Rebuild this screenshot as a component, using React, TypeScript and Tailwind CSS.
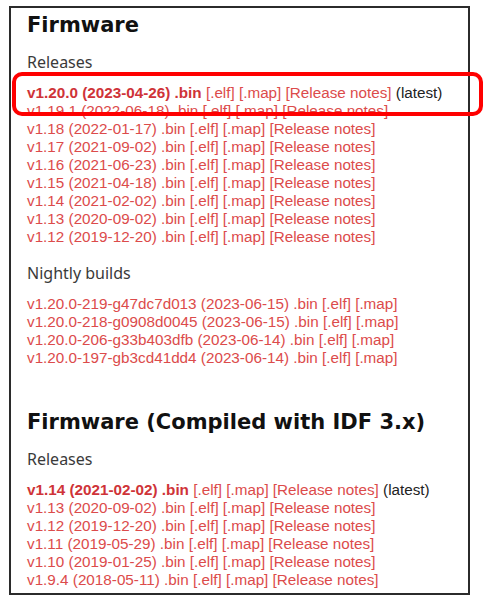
const releases = [
  { v: "v1.20.0", d: "2023-04-26", latest: true },
  { v: "v1.19.1", d: "2022-06-18" },
  { v: "v1.18", d: "2022-01-17" },
  { v: "v1.17", d: "2021-09-02" },
  { v: "v1.16", d: "2021-06-23" },
  { v: "v1.15", d: "2021-04-18" },
  { v: "v1.14", d: "2021-02-02" },
  { v: "v1.13", d: "2020-09-02" },
  { v: "v1.12", d: "2019-12-20" },
];

const nightly = [
  { v: "v1.20.0-219-g47dc7d013", d: "2023-06-15" },
  { v: "v1.20.0-218-g0908d0045", d: "2023-06-15" },
  { v: "v1.20.0-206-g33b403dfb", d: "2023-06-14" },
  { v: "v1.20.0-197-gb3cd41dd4", d: "2023-06-14" },
];

const idf3 = [
  { v: "v1.14", d: "2021-02-02", latest: true },
  { v: "v1.13", d: "2020-09-02" },
  { v: "v1.12", d: "2019-12-20" },
  { v: "v1.11", d: "2019-05-29" },
  { v: "v1.10", d: "2019-01-25" },
  { v: "v1.9.4", d: "2018-05-11" },
];

type Build = { v: string; d: string; latest?: boolean };

function BuildRow({ b, notes = true }: { b: Build; notes?: boolean }) {
  return (
    <div className="leading-[18px] text-[#dc4b4b] whitespace-nowrap">
      <span className={b.latest ? "font-bold text-[#cf3338]" : ""}>
        {b.v} ({b.d}) .bin
      </span>{" "}
      [.elf] [.map]{notes && " [Release notes]"}
      {b.latest && <span className="text-[#222]"> (latest)</span>}
    </div>
  );
}

function SubHeading({ children }: { children: React.ReactNode }) {
  return (
    <h3 className="font-['Noto_Sans',sans-serif] text-[16px] text-[#3a3a3a] leading-5 mb-[12px]">{children}</h3>
  );
}

export default function App() {
  return (
    <div className="relative w-[488px] h-[601px] bg-white pt-[6px] pl-[9px]">
      <div className="w-[461px] h-[589px] border-2 border-[#2b2b2b] px-[16px] pt-[3px] font-['Liberation_Sans',sans-serif] text-[15.25px]">
        <h2 className="font-['DejaVu_Sans',sans-serif] font-bold text-[21px] text-[#111] leading-7 mb-[13px]">Firmware</h2>
        <SubHeading>Releases</SubHeading>
        {releases.map((b) => (
          <BuildRow key={b.v} b={b} />
        ))}
        <div className="mt-[17px]">
          <SubHeading>Nightly builds</SubHeading>
          {nightly.map((b) => (
            <BuildRow key={b.v} b={b} notes={false} />
          ))}
        </div>
        <h2 className="font-['DejaVu_Sans',sans-serif] font-bold text-[21px] text-[#111] leading-7 mt-[41px] mb-[13px]">
          Firmware (Compiled with IDF 3.x)
        </h2>
        <SubHeading>Releases</SubHeading>
        {idf3.map((b) => (
          <BuildRow key={b.v} b={b} />
        ))}
      </div>
      <div className="absolute left-[12px] top-[72px] w-[471px] h-[44px] border-4 border-[#ff0000] rounded-[10px]" />
    </div>
  );
}
